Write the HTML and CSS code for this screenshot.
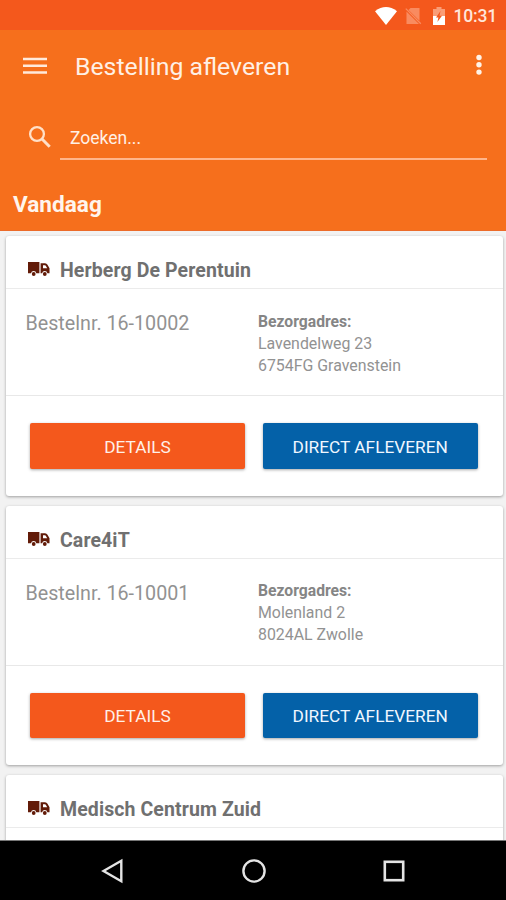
FILE: index.html
```
<!DOCTYPE html>
<html lang="nl">
<head>
<meta charset="utf-8">
<title>Bestelling afleveren</title>
<link rel="stylesheet" href="styles.css">
</head>
<body>
<svg width="0" height="0" class="defs" aria-hidden="true">
  <symbol id="truck" viewBox="0 0 22 15">
    <path fill="#621b08" d="M0 0H11.4V11.2H8.3A2.7 2.7 0 0 0 3 11.2H0ZM12.6 1.2H17Q18.7 1.2 19.5 2.7L21.5 6.3V11.2H19.4A2.7 2.7 0 0 0 14.1 11.2H12.6ZM15 3.2V6.2H19.2L17.8 3.7Q17.5 3.2 16.9 3.2Z"/>
    <circle cx="5.7" cy="12" r="1.9" fill="#621b08"/><circle cx="16.8" cy="12" r="1.9" fill="#621b08"/>
  </symbol>
</svg>
<div class="screen">
  <div class="status">
    <svg class="wifi" width="22" height="18" viewBox="0 0 22 18"><path d="M0 4.3Q11-4.1 22 4.3L11 18Z" fill="#fff"/></svg>
    <svg class="sim" width="17" height="18" viewBox="0 0 17 18"><path d="M5.5 1H14.5V13.8L3.5 3ZM1.5 4.5L14 17H1.5Z" fill="#f98b60"/><path d="M.8 1.6L15.8 16.7" stroke="#f98b60" stroke-width="1.3"/></svg>
    <svg class="battery" width="12" height="18" viewBox="0 0 12 18"><path d="M3.5 0H8.5V2H12V9H0V2H3.5Z" fill="#fa9d77"/><path d="M0 9H12V18H0Z" fill="#fff"/><path d="M7.5 4L3 10.5H5.4L4.4 15L9 8.8H6.5Z" fill="#f4581c"/></svg>
    <span class="clock">10:31</span>
  </div>
  <header class="header">
    <div class="toolbar">
      <svg class="menu" width="24" height="18" viewBox="0 0 24 18"><path d="M0 2H24M0 8.7H24M0 15.5H24" stroke="#ffeadb" stroke-width="2.6"/></svg>
      <h1 class="title">Bestelling afleveren</h1>
      <svg class="more" width="6" height="22" viewBox="0 0 6 22"><g fill="#fff3e8"><circle cx="3" cy="3.5" r="2.7"/><circle cx="3" cy="10.8" r="2.7"/><circle cx="3" cy="18.1" r="2.7"/></g></svg>
    </div>
    <div class="search">
      <svg width="24" height="24" viewBox="0 0 24 24" fill="none" stroke="#ffe0c8"><circle cx="9" cy="9" r="6.9" stroke-width="2.3"/><path d="M14 14L21.7 21.7" stroke-width="3"/></svg>
      <div class="field"><span class="placeholder">Zoeken...</span></div>
    </div>
    <h2 class="section">Vandaag</h2>
  </header>
  <main class="list">
    <article class="card">
      <div class="card-head"><svg class="truck" width="22" height="15"><use href="#truck"/></svg><span class="name">Herberg De Perentuin</span></div>
      <div class="card-body">
        <div class="order"><span>Bestelnr. 16-10002</span></div>
        <div class="address"><b>Bezorgadres:</b><span>Lavendelweg 23</span><span>6754FG Gravenstein</span></div>
      </div>
      <div class="actions"><div class="btn details"><span>DETAILS</span></div><div class="btn deliver"><span>DIRECT AFLEVEREN</span></div></div>
    </article>
    <article class="card">
      <div class="card-head"><svg class="truck" width="22" height="15"><use href="#truck"/></svg><span class="name">Care4iT</span></div>
      <div class="card-body">
        <div class="order"><span>Bestelnr. 16-10001</span></div>
        <div class="address"><b>Bezorgadres:</b><span>Molenland 2</span><span>8024AL Zwolle</span></div>
      </div>
      <div class="actions"><div class="btn details"><span>DETAILS</span></div><div class="btn deliver"><span>DIRECT AFLEVEREN</span></div></div>
    </article>
    <article class="card">
      <div class="card-head"><svg class="truck" width="22" height="15"><use href="#truck"/></svg><span class="name">Medisch Centrum Zuid</span></div>
      <div class="card-body"></div>
    </article>
  </main>
  <nav class="nav">
    <svg width="24" height="26" viewBox="0 0 24 26"><path d="M2.5 13L20.3 2.8V23.2Z" fill="none" stroke="#e4e4e4" stroke-width="2.4"/></svg>
    <svg width="26" height="26" viewBox="0 0 26 26"><circle cx="13" cy="13" r="10.6" fill="none" stroke="#e4e4e4" stroke-width="2.4"/></svg>
    <svg width="24" height="26" viewBox="0 0 24 26"><rect x="2.8" y="3.8" width="18.4" height="18.4" fill="none" stroke="#e4e4e4" stroke-width="2.6"/></svg>
  </nav>
</div>
</body>
</html>
```
FILE: styles.css
```
* { box-sizing: border-box; }
body { margin: 0; font-family: Roboto, "Liberation Sans", sans-serif; }
svg { display: block; flex: none; }
.defs { display: none; }
.screen { width: 506px; height: 900px; display: flex; flex-direction: column; overflow: hidden; background: #f2f2f2; }
.status { height: 30px; flex: none; display: flex; align-items: center; padding: 1px 9px 0 375px; background: #f4581c; }
.sim { margin-left: 8px; }
.battery { margin-left: 11px; }
.clock { margin-left: 8.5px; font-size: 17.5px; font-weight: 500; line-height: 24px; letter-spacing: -0.2px; padding-top: 1px; color: #ffe6da; }
.header { height: 201px; flex: none; background: #f66f1c; border-bottom: 1px solid #ec6b29; }
.toolbar { height: 72px; display: flex; align-items: center; padding: 0 24px 0 23px; }
.menu { margin-top: -1px; }
.title { margin: 1px auto 0 28px; font-size: 24.8px; font-weight: 400; line-height: 30px; color: #fff0e5; }
.more { margin-bottom: 2px; }
.search { height: 58px; display: flex; padding: 0 19px 0 28px; }
.search svg { margin-top: 23px; }
.field { flex: 1; margin-left: 8px; padding: 24px 10px 0; border-bottom: 2px solid #ffb58b; }
.placeholder { display: block; font-size: 17.5px; line-height: 24px; color: #fff0e5; }
.section { margin: 29px 0 0 13px; font-size: 22.6px; font-weight: 700; line-height: 32px; color: #fff5ed; }
.list { flex: 1; min-height: 0; padding: 5px 3.5px 0 6px; display: flex; flex-direction: column; gap: 10px; overflow: hidden; }
.card { flex: none; height: 259.6px; background: #fff; border-radius: 3px; box-shadow: 0 1px 3px rgba(0,0,0,.35); }
.card-head { height: 53px; display: flex; align-items: center; padding: 16px 22px 0; border-bottom: 1px solid #ebebeb; }
.truck { margin-top: -1px; }
.name { margin-left: 10px; padding-top: 2px; font-size: 19.5px; font-weight: 700; line-height: 24px; letter-spacing: 0.1px; color: #707070; white-space: nowrap; }
.card-body { height: 107px; padding: 21.6px 20px 0; display: grid; grid-template-columns: 232px 1fr; border-bottom: 1px solid #e8e8e8; }
.order { margin-left: -0.5px; padding-top: 0.5px; font-size: 19.7px; line-height: 26px; color: #929292; }
.address { display: flex; flex-direction: column; align-items: flex-start; font-size: 15.9px; line-height: 22px; color: #929292; }
.address b { font-size: 15.7px; color: #858585; }
.actions { padding: 27px 24.5px 0 24px; display: grid; grid-template-columns: 215px 215.5px; gap: 17.5px; }
.btn { height: 45.5px; display: flex; align-items: center; justify-content: center; border-radius: 2px; font-size: 17.3px; padding-top: 2px; color: #fff0e8; box-shadow: 0 1px 3px rgba(0,0,0,.35); }
.details { background: #f4581c; }
.deliver { background: #0461a8; color: #f0f7ff; }
.nav { height: 60px; flex: none; display: flex; align-items: center; padding: 0 100px 0 101px; justify-content: space-between; background: #000; border-top: 1px solid #777; }
```
